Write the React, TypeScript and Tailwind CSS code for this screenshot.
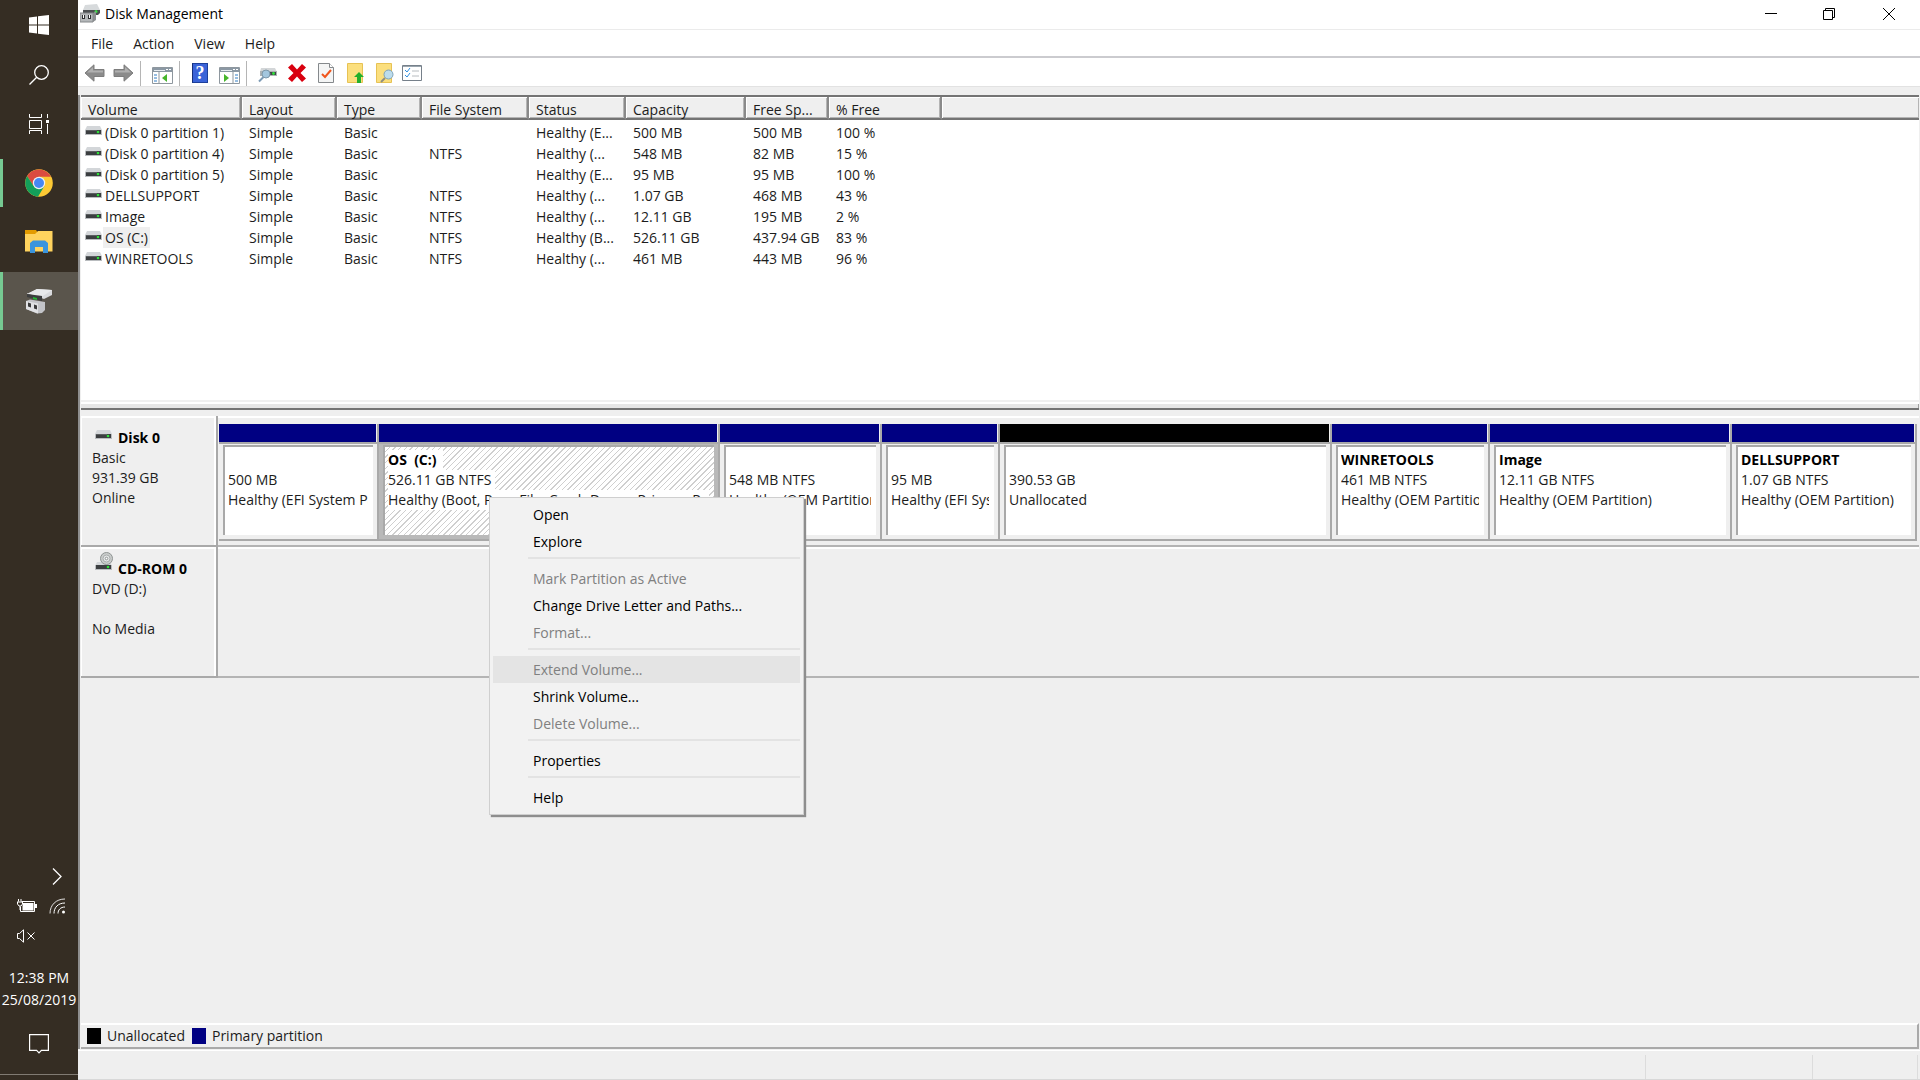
import React from 'react';
import clsx from 'clsx';

const volumes = [
  { name: '(Disk 0 partition 1)', fs: '', status: 'Healthy (E...', capacity: '500 MB', free: '500 MB', percent: '100 %' },
  { name: '(Disk 0 partition 4)', fs: 'NTFS', status: 'Healthy (...', capacity: '548 MB', free: '82 MB', percent: '15 %' },
  { name: '(Disk 0 partition 5)', fs: '', status: 'Healthy (E...', capacity: '95 MB', free: '95 MB', percent: '100 %' },
  { name: 'DELLSUPPORT', fs: 'NTFS', status: 'Healthy (...', capacity: '1.07 GB', free: '468 MB', percent: '43 %' },
  { name: 'Image', fs: 'NTFS', status: 'Healthy (...', capacity: '12.11 GB', free: '195 MB', percent: '2 %' },
  { name: 'OS (C:)', fs: 'NTFS', status: 'Healthy (B...', capacity: '526.11 GB', free: '437.94 GB', percent: '83 %', selected: true },
  { name: 'WINRETOOLS', fs: 'NTFS', status: 'Healthy (...', capacity: '461 MB', free: '443 MB', percent: '96 %' },
];

const columns = ['Volume', 'Layout', 'Type', 'File System', 'Status', 'Capacity', 'Free Sp...', '% Free', ''];

const partitions = [
  { name: '', size: '500 MB', status: 'Healthy (EFI System Partition)', weight: 160 },
  { name: 'OS  (C:)', size: '526.11 GB NTFS', status: 'Healthy (Boot, Page File, Crash Dump, Primary Partition)', weight: 341, selected: true },
  { name: '', size: '548 MB NTFS', status: 'Healthy (OEM Partition)', weight: 162 },
  { name: '', size: '95 MB', status: 'Healthy (EFI System Partition)', weight: 118 },
  { name: '', size: '390.53 GB', status: 'Unallocated', weight: 332, unallocated: true },
  { name: 'WINRETOOLS', size: '461 MB NTFS', status: 'Healthy (OEM Partition)', weight: 158 },
  { name: 'Image', size: '12.11 GB NTFS', status: 'Healthy (OEM Partition)', weight: 242 },
  { name: 'DELLSUPPORT', size: '1.07 GB NTFS', status: 'Healthy (OEM Partition)', weight: 185 },
];

const menuGroups = [
  [{ label: 'Open' }, { label: 'Explore' }],
  [{ label: 'Mark Partition as Active', disabled: true }, { label: 'Change Drive Letter and Paths...' }, { label: 'Format...', disabled: true }],
  [{ label: 'Extend Volume...', disabled: true, active: true }, { label: 'Shrink Volume...' }, { label: 'Delete Volume...', disabled: true }],
  [{ label: 'Properties' }],
  [{ label: 'Help' }],
] as { label: string; disabled?: boolean; active?: boolean }[][];

function DriveIcon() {
  return (
    <svg className="block shrink-0" width="17" height="10" viewBox="0 0 17 10">
      <path d="M2 0h13l2 4H0z" fill="#d3d6d9" />
      <path d="M0 4h17v5H0z" fill="#b9bcbf" />
      <path d="M1 4h15v4H1z" fill="#3b3e40" />
      <path d="M1 4h11v1H1z" fill="#5b5f61" />
      <circle cx="13" cy="6" r="1.3" fill="#2fe03a" />
    </svg>
  );
}

function CdIcon() {
  return (
    <svg className="block shrink-0" width="19" height="19" viewBox="0 0 19 19">
      <path d="M2 10h13l2 4H0z" fill="#d3d6d9" />
      <circle cx="11.500" cy="6.500" r="6" fill="#c9cccb" stroke="#8f9493" />
      <circle cx="11.500" cy="6.500" r="3.500" fill="#e6e8e8" stroke="#a9adac" />
      <circle cx="11.500" cy="6.500" r="1.300" fill="#fff" stroke="#8f9493" />
      <path d="M0 13h17v5H0z" fill="#b9bcbf" />
      <path d="M1 13h15v4H1z" fill="#3b3e40" />
      <circle cx="13" cy="15" r="1.3" fill="#2fe03a" />
    </svg>
  );
}

function AppIcon() {
  return (
    <svg className="block" width="20" height="20" viewBox="0 0 20 20">
      <path d="M5 1l12-1 3 6H3z" fill="#d7dadc" />
      <path d="M3 6h17v3l-2 2H3z" fill="#4c4f51" />
      <circle cx="16" cy="7.500" r="1.500" fill="#35e23f" />
      <path d="M0 9h13l3-2v9l-3 2H0z" fill="#8d9092" />
      <path d="M0 9h13v9H0z" fill="#b4b7b9" stroke="#85888a" />
      <path d="M2 11h3v4H2zM8 11h3v4H8z" fill="#2f3132" />
      <path d="M3 11h1v3H3zM9 11h1v3H9z" fill="#fff" />
    </svg>
  );
}

function Arrow({ flip }: { flip?: boolean }) {
  return (
    <svg className={clsx('block', flip && '-scale-x-100')} width="21" height="18" viewBox="0 0 21 18">
      <path d="M1 9l9-8.200v4.700h10v7H10v4.700z" fill="#8b8b8b" stroke="#7d7d7d" />
      <path d="M3 8.500l6-5.500v3.500h10v2z" fill="#b0b0b0" />
    </svg>
  );
}

function PaneIcon({ right }: { right?: boolean }) {
  return (
    <svg className="block" width="21" height="17" viewBox="0 0 21 17">
      <path d="M.5.5h20v16H.5z" fill="#fff" stroke="#8e979e" />
      <path d="M1 1h19v4H1z" fill="#8b98a4" />
      <path d="M2 3h11v1H2z" fill="#e7ecf0" />
      <path d="M14 2h2v1h-2zM17 2h2v1h-2z" fill="#fff" />
      {right ? (
        <>
          <path d="M14 5v12" stroke="#8e979e" />
          <path d="M16 8h3M16 11h3M16 14h3" stroke="#2f7cc4" />
          <path d="M5 7l5 4-5 4z" fill="#46b52c" />
        </>
      ) : (
        <>
          <path d="M7 5v12" stroke="#8e979e" />
          <path d="M2 8h3M2 11h3M2 14h3" stroke="#2f7cc4" />
          <path d="M15 7l-5 4 5 4z" fill="#46b52c" />
        </>
      )}
    </svg>
  );
}

function HelpIcon() {
  return (
    <span className="flex h-5 w-4 items-center justify-center border border-[#1d3f9b] border-l-[#16307a] bg-[#3a63d8] font-['Liberation_Serif',serif] text-lg leading-none font-bold text-white">
      ?
    </span>
  );
}

function DriveSearchIcon() {
  return (
    <svg className="block" width="19" height="17" viewBox="0 0 19 17">
      <path d="M3 2h14l2 4H2z" fill="#d3d6d8" />
      <path d="M2 5h17v5H2z" fill="#aeb2b4" />
      <path d="M10 6h8v3h-8z" fill="#3e4345" />
      <circle cx="15.500" cy="7.500" r="1.400" fill="#2fe03a" />
      <path d="M1 15.500l4.500-4.500" stroke="#7d9bb5" strokeWidth="2" />
      <circle cx="8" cy="8" r="4" fill="#a3c6de" stroke="#7d97a9" />
    </svg>
  );
}

function DeleteIcon() {
  return (
    <svg className="block" width="18" height="18" viewBox="0 0 18 18">
      <path d="M4 0l5 5.500L14 0l4 3.500L12.500 9l5.500 5.500-4 3.500-5-5.500L4 18l-4-3.500L5.500 9 0 3.500z" fill="#d9000f" />
    </svg>
  );
}

function CheckPageIcon() {
  return (
    <svg className="block" width="16" height="20" viewBox="0 0 16 20">
      <path d="M.5.5h11l4 4v15H.5z" fill="#f4f5f5" stroke="#85898c" />
      <path d="M11.500.5v4h4" fill="#fff" stroke="#85898c" />
      <path d="M4 11l3 3 6-7" fill="none" stroke="#f0561d" strokeWidth="2" />
    </svg>
  );
}

function FolderUpIcon() {
  return (
    <svg className="block" width="17" height="20" viewBox="0 0 17 20">
      <path d="M.5.5h15v19H.5z" fill="#fbdf7e" stroke="#e7c254" />
      <path d="M12 9l5 5h-3v6h-4v-6H7z" fill="#23b02b" />
    </svg>
  );
}

function FolderSearchIcon() {
  return (
    <svg className="block" width="18" height="20" viewBox="0 0 18 20">
      <path d="M.5.5h15v19H.5z" fill="#fbdf7e" stroke="#e7c254" />
      <path d="M5 19l4-4" stroke="#8f8f80" strokeWidth="2" />
      <circle cx="12.500" cy="11.500" r="4.500" fill="#bcdcec" stroke="#7fa3b8" />
    </svg>
  );
}

function ChecklistIcon() {
  return (
    <svg className="block" width="20" height="16" viewBox="0 0 20 16">
      <path d="M.5.5h19v15H.5z" fill="#fff" stroke="#76808a" />
      <path d="M1 1h18v1H1z" fill="#9aa5ae" />
      <path d="M3 5l2 2 3-4M3 10l2 2 3-4" fill="none" stroke="#2f8fe0" />
      <path d="M10 6h7M10 11h7" stroke="#b7bcc0" />
    </svg>
  );
}

function ChromeIcon() {
  return (
    <svg width="28" height="28" viewBox="0 0 28 28">
      <circle cx="14" cy="14" r="13.800" fill="#fcc934" />
      <path d="M2.050 7.100A13.800 13.800 0 0 1 25.950 7.800H14L8.600 17.100z" fill="#db4b40" />
      <path d="M2.050 7.100A13.800 13.800 0 0 0 13 27.770L19.400 17.100 8.600 17.100z" fill="#139f5a" />
      <circle cx="14" cy="14" r="6.200" fill="#f1f1f1" />
      <circle cx="14" cy="14" r="5" fill="#4587f3" />
    </svg>
  );
}

function FolderIcon() {
  return (
    <svg width="28" height="24" viewBox="0 0 28 24">
      <path d="M0 1h11l2 3v4H0z" fill="#e39b00" />
      <path d="M0 5h10l3-3h14.500v20.500H0z" fill="#ffd35e" />
      <path d="M5 24V14l3-2.500h12l3 2.500v10h-5v-6h-8v6z" fill="#3a94dd" />
    </svg>
  );
}

function DiskTaskIcon() {
  return (
    <svg width="27" height="26" viewBox="0 0 27 26">
      <path d="M1 6l10-5 15 1v5l-8 4-17-6z" fill="#d9dadd" />
      <path d="M1 6l10-5 15 1-9 6z" fill="#e8e9eb" />
      <path d="M1 6l15 2v5L1 9z" fill="#3c3d3e" />
      <path d="M7 9l4 1v2l-4-1z" fill="#24b534" />
      <path d="M0 13l4-1.500 15 2.500v8l-3 3-5 .5L0 21z" fill="#c3c4c8" />
      <path d="M0 13l12 2.500v10L0 21z" fill="#e0e1e4" />
      <path d="M2 14.500l3 1v4l-3-1zM8 16.500l3 1v4l-3-1z" fill="#3a3a3b" />
    </svg>
  );
}

function TaskButton({ label, className, running, children }: { label: string; className: string; running?: boolean; children: React.ReactNode }) {
  return (
    <button
      aria-label={label}
      className={clsx('flex w-full items-center justify-center border-l-3 pr-[3px]', running ? 'border-[#76c992]' : 'border-transparent', className)}
    >
      {children}
    </button>
  );
}

function Taskbar() {
  return (
    <aside className="flex w-[78px] shrink-0 flex-col bg-[#352d23] text-white">
      <TaskButton label="Start" className="h-[50px]">
        <svg width="20" height="20" viewBox="0 0 20 20" fill="#fff">
          <path d="M0 2.500l8-1v8H0zM9 1.300L20 0v9.500H9zM0 10.500h8v8l-8-1zM9 10.500h11V20L9 18.700z" />
        </svg>
      </TaskButton>
      <TaskButton label="Search" className="h-[50px]">
        <svg width="20" height="20" viewBox="0 0 20 20" fill="none" stroke="#fff" strokeWidth="1.300">
          <circle cx="12.500" cy="7.500" r="6.800" />
          <path d="M7.700 12.300L.5 19.500" />
        </svg>
      </TaskButton>
      <TaskButton label="Task View" className="h-12">
        <svg width="20" height="20" viewBox="0 0 20 20" fill="none" stroke="#fff">
          <path d="M.5 0v3.500h12V0M.5 6.500h12v8H.5zM.5 20v-3.500h12V20M18.500 0v4M18.500 10v10" />
          <path d="M17 6h3v3h-3z" fill="#fff" stroke="none" />
        </svg>
      </TaskButton>
      <TaskButton label="Google Chrome" running className="mt-[11px] h-12">
        <ChromeIcon />
      </TaskButton>
      <TaskButton label="File Explorer" className="mt-[6px] h-14">
        <FolderIcon />
      </TaskButton>
      <TaskButton label="Disk Management" running className="mt-[3px] h-[58px] bg-[#5a554c]">
        <DiskTaskIcon />
      </TaskButton>

      <div className="mt-auto flex flex-col">
        <button aria-label="Show hidden icons" className="ml-[52px] flex h-[30px] w-5 items-center">
          <svg width="10" height="17" viewBox="0 0 10 17" fill="none" stroke="#fff" strokeWidth="1.300">
            <path d="M1 .5l8 8-8 8" />
          </svg>
        </button>
        <div className="flex h-[30px] items-center gap-3 pl-[17px]">
          <svg width="20" height="14" viewBox="0 0 20 14">
            <path d="M4.500 2.500h13v10h-14V8" fill="none" stroke="#fff" />
            <path d="M6 4h10.500v7.500h-11V7zM18 5h2v4h-2z" fill="#fff" />
            <path d="M1.500 0v2.500M4 0v2.500M0 3h5.500v2L4 7H2L.5 5V3M3 7v4" fill="none" stroke="#fff" />
          </svg>
          <svg width="17" height="16" viewBox="0 0 17 16" fill="none" stroke="#fff">
            <path d="M1 15.500C1 7 7 1 16 1" opacity=".85" />
            <path d="M5 15.500C5 9.500 9 5 16 5" />
            <path d="M9 15.500C9 12 11.500 9 16 9" />
            <circle cx="14.500" cy="14" r="1.500" fill="#fff" stroke="none" />
          </svg>
        </div>
        <div className="flex h-[30px] items-center pl-[17px]">
          <svg width="19" height="14" viewBox="0 0 19 14" fill="none" stroke="#fff">
            <path d="M.5 4.500h2L6.500.8v12.400L2.500 9.500h-2z" />
            <path d="M10.500 3.500l7 7M17.500 3.500l-7 7" />
          </svg>
        </div>
        <div className="mt-4 flex flex-col items-center text-sm leading-[22px] whitespace-nowrap">
          <span>12:38 PM</span>
          <span>25/08/2019</span>
        </div>
        <button aria-label="Notifications" className="mt-[6px] flex h-[54px] items-center justify-center">
          <svg width="20" height="20" viewBox="0 0 20 20" fill="none" stroke="#fff" strokeWidth="1.200">
            <path d="M.6.6h18.800v15.800h-7L10 18.800l-2.400-2.400h-7z" />
          </svg>
        </button>
        <div className="mt-[3px] h-[6px] border-t border-[#817b73]" />
      </div>
    </aside>
  );
}

function TitleBar() {
  return (
    <header className="flex h-[30px] shrink-0 items-center border-b border-[#ebebeb] bg-white pb-[2px]">
      <div className="ml-[2px] flex items-center gap-[5px]">
        <AppIcon />
        <h1 className="text-sm text-black">Disk Management</h1>
      </div>
      <div className="ml-auto flex">
        <button aria-label="Minimize" className="flex h-[26px] w-[58px] items-center justify-center">
          <svg width="12" height="12" viewBox="0 0 12 12"><path d="M0 5.500h12" stroke="#000" /></svg>
        </button>
        <button aria-label="Restore" className="flex h-[26px] w-[58px] items-center justify-center">
          <svg width="12" height="12" viewBox="0 0 12 12" fill="none" stroke="#000">
            <path d="M.5 2.500h9v9h-9zM2.500 2.500v-2h9v9h-2" />
          </svg>
        </button>
        <button aria-label="Close" className="flex h-[26px] w-[62px] items-center justify-center">
          <svg width="12" height="12" viewBox="0 0 12 12"><path d="M0 0l12 12M12 0L0 12" stroke="#000" /></svg>
        </button>
      </div>
    </header>
  );
}

function Toolbar() {
  return (
    <div className="flex h-7 shrink-0 items-center bg-white pt-[2px] pl-[6px]">
      <button aria-label="Back"><Arrow /></button>
      <button aria-label="Forward" className="ml-2"><Arrow flip /></button>
      <div className="mx-[6px] h-[25px] w-px bg-[#b5b5b5]" />
      <button aria-label="Show console tree" className="ml-[5px] pt-1"><PaneIcon /></button>
      <div className="mx-[6px] h-[25px] w-px bg-[#b5b5b5]" />
      <button aria-label="Help" className="ml-[6px]"><HelpIcon /></button>
      <button aria-label="Show action pane" className="ml-[11px] pt-1"><PaneIcon right /></button>
      <div className="mx-[6px] h-[25px] w-px bg-[#b5b5b5]" />
      <button aria-label="Rescan disks" className="ml-[5px] pt-[2px]"><DriveSearchIcon /></button>
      <button aria-label="Delete" className="ml-[11px]"><DeleteIcon /></button>
      <button aria-label="Check" className="ml-3"><CheckPageIcon /></button>
      <button aria-label="Up one level" className="ml-[13px]"><FolderUpIcon /></button>
      <button aria-label="Find" className="ml-3"><FolderSearchIcon /></button>
      <button aria-label="Properties" className="ml-2"><ChecklistIcon /></button>
    </div>
  );
}

function VolumeList() {
  return (
    <section className="flex h-[315px] shrink-0 flex-col border-t-2 border-[#747474] bg-white">
      <table className="w-full table-fixed border-collapse text-left">
        <colgroup>
          <col className="w-[161px]" />
          <col className="w-[95px]" />
          <col className="w-[85px]" />
          <col className="w-[107px]" />
          <col className="w-[97px]" />
          <col className="w-[120px]" />
          <col className="w-[83px]" />
          <col className="w-[113px]" />
          <col />
        </colgroup>
        <thead>
          <tr>
            {columns.map((column, i) => (
              <th key={column} className="p-0 pb-[2px] font-normal">
                <div className={clsx('h-[23px] border-b-2 border-b-[#747474] bg-[#efefef] pl-[7px] leading-[26px] shadow-[inset_1px_1px_0_#fff,inset_-1px_-1px_0_#b4b4b4]', i < 8 && 'border-r-2 border-r-[#8a8a8a]')}>
                  {column}
                </div>
              </th>
            ))}
          </tr>
        </thead>
        <tbody>
          {volumes.map(v => (
            <tr key={v.name} className="h-[21px] leading-[21px] whitespace-nowrap *:py-0 *:pr-0 *:pl-[7px]">
              <td>
                <div className="-ml-[3px] flex">
                  <span className="pt-1"><DriveIcon /></span>
                  <span className={clsx('ml-px px-[2px]', v.selected && 'bg-[#efefef]')}>{v.name}</span>
                </div>
              </td>
              <td>Simple</td>
              <td>Basic</td>
              <td>{v.fs}</td>
              <td>{v.status}</td>
              <td>{v.capacity}</td>
              <td>{v.free}</td>
              <td>{v.percent}</td>
              <td></td>
            </tr>
          ))}
        </tbody>
      </table>
      <div className="mt-auto h-[10px] border-b-2 border-[#747474] bg-[#e6e6e6] shadow-[inset_0_2px_0_#f0f0f0,inset_0_4px_0_#fff,inset_-1px_0_0_#a0a0a0]" />
    </section>
  );
}

function DiskHeader({ icon, title, lines }: { icon: React.ReactNode; title: string; lines: string[] }) {
  return (
    <div className="w-[137px] shrink-0 border-r-2 border-b-2 border-[#a9a9a9] pl-[11px] leading-5 shadow-[inset_1px_2px_0_#fff,inset_-2px_0_0_#fff]">
      <div className="flex h-8 items-end gap-1">
        <span className="w-[22px] pb-2 pl-[3px]">{icon}</span>
        <h2 className="font-bold text-black">{title}</h2>
      </div>
      {lines.map((line, i) => (
        <p key={i} className="h-5">{line}</p>
      ))}
    </div>
  );
}

function Partition({ partition: p }: { partition: (typeof partitions)[number] }) {
  return (
    <div className="flex min-w-0 basis-0 flex-col" style={{ flexGrow: p.weight }}>
      <div className="flex h-[18px] border-r-2 border-[#a9a9a9]">
        <div className={clsx('mr-px flex-1', p.unallocated ? 'bg-black' : 'bg-[#000082]')} />
      </div>
      <div
        className={clsx(
          'h-[99px] border-t-2 border-r-2 border-b-2 border-[#a9a9a9] pt-px pr-1 pb-1 pl-1',
          p.selected ? 'bg-[#b9b9b9]' : 'bg-[#efefef]'
        )}
      >
        <div
          className={clsx(
            'h-full overflow-hidden border-t-2 border-l-2 border-[#a9a9a9] pt-[3px] pr-[5px] pl-[3px] leading-5 whitespace-pre',
            p.selected
              ? 'bg-[repeating-linear-gradient(135deg,#fff_0px,#fff_3px,#cfcfcf_3px,#cfcfcf_4px)]'
              : 'bg-white'
          )}
        >
          <div className="overflow-hidden">
            <p className="h-5 font-bold text-black">
              {p.name && <span className="inline-block h-5 bg-white pr-[6px]">{p.name}</span>}
            </p>
            <p className="h-5"><span className="inline-block h-5 bg-white pr-1">{p.size}</span></p>
            <p className="h-5"><span className="inline-block h-5 bg-white pr-1">{p.status}</span></p>
          </div>
        </div>
      </div>
    </div>
  );
}

function DiskGraph() {
  return (
    <section className="flex-1 bg-[#efefef] pt-[6px]">
      <div className="flex h-[131px]">
        <DiskHeader icon={<DriveIcon />} title="Disk 0" lines={['Basic', '931.39 GB', 'Online']} />
        <div className="flex flex-1 border-b-2 border-[#b4b4b4] pt-2 pr-[2px] pl-px shadow-[inset_0_2px_0_#fff]">
          {partitions.map((p, i) => (
            <Partition key={i} partition={p} />
          ))}
        </div>
      </div>
      <div className="flex h-[131px]">
        <DiskHeader icon={<CdIcon />} title="CD-ROM 0" lines={['DVD (D:)', '', 'No Media']} />
        <div className="flex-1 border-b-2 border-[#b4b4b4] shadow-[inset_0_2px_0_#fff]" />
      </div>
    </section>
  );
}

function ContextMenu() {
  return (
    <div
      role="menu"
      className="absolute top-[497px] left-[411px] w-[315px] border border-[#cfcfcf] bg-[#f2f2f2] px-[3px] py-[3px] text-black shadow-[2px_2px_1px_#8e8e8e]"
    >
      {menuGroups.map((group, i) => (
        <div key={i}>
          {i > 0 && <hr className="mt-[2px] mb-[6px] ml-[35px] h-[2px] border-0 bg-[#e3e3e3]" />}
          {group.map(item => (
            <button
              key={item.label}
              role="menuitem"
              disabled={item.disabled}
              className={clsx('block h-[27px] w-full pl-10 text-left', item.disabled && 'text-[#808080]', item.active && 'bg-[#e4e4e4]')}
            >
              {item.label}
            </button>
          ))}
        </div>
      ))}
    </div>
  );
}

export default function App() {
  return (
    <div className="flex h-screen overflow-hidden bg-[#efefef] font-['Open_Sans','Noto_Sans',sans-serif] text-sm text-[#1c1c1c]">
      <Taskbar />
      <main className="relative flex min-w-0 flex-1 flex-col">
        <TitleBar />
        <nav className="flex h-7 shrink-0 items-center gap-5 border-b-2 border-[#cbcbcf] bg-white pt-[2px] pl-[13px]">
          <button>File</button>
          <button>Action</button>
          <button>View</button>
          <button>Help</button>
        </nav>
        <Toolbar />
        <div className="h-[9px] shrink-0 border-t border-[#e2e2e2]" />

        <div className="mr-px flex flex-1 flex-col border-l-2 border-[#8f8f8f] pl-px">
          <VolumeList />
          <DiskGraph />
          <div className="flex h-[26px] shrink-0 items-center border-t-2 border-r-2 border-b-2 border-t-white border-r-[#a9a9a9] border-b-[#a9a9a9] pl-[6px] leading-6">
            <span className="mr-[6px] h-4 w-[14px] bg-black" />
            Unallocated
            <span className="mr-[6px] ml-[7px] h-4 w-[14px] bg-[#000082]" />
            Primary partition
          </div>
        </div>

        <footer className="mt-px flex h-[30px] shrink-0 justify-end border-t border-b border-t-white border-b-[#d8d8d8] pt-1 pr-[2px]">
          <div className="w-[167px] border-l border-[#dcdcdc]" />
          <div className="w-[106px] border-x border-[#dcdcdc]" />
        </footer>
        <ContextMenu />
      </main>
    </div>
  );
}
